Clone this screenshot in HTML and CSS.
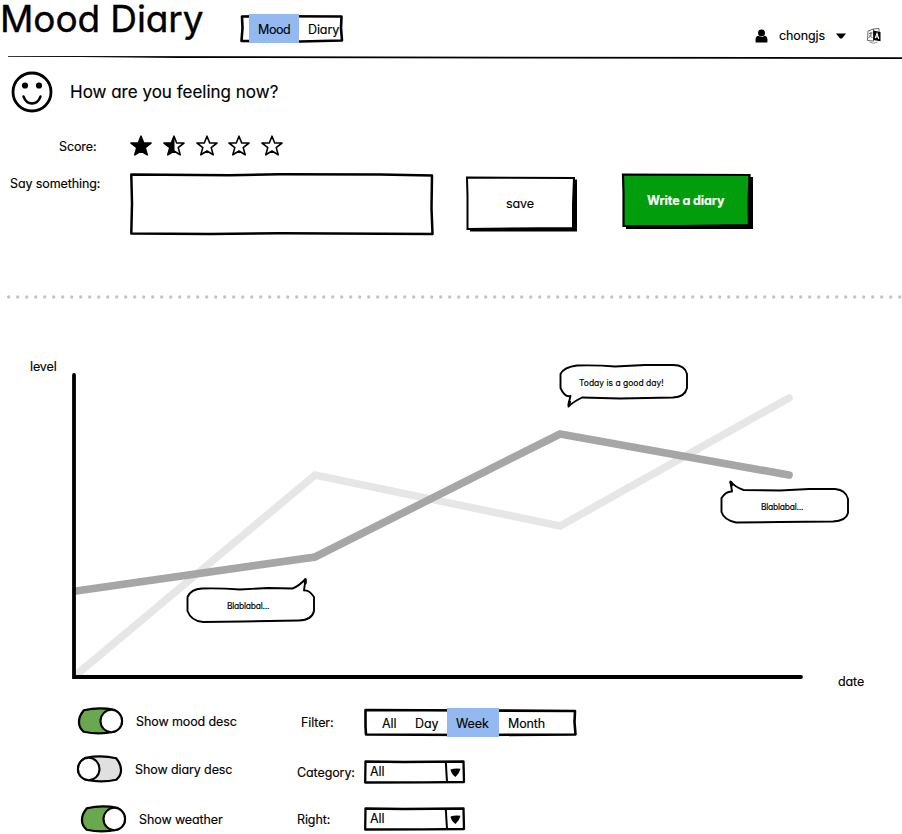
FILE: index.html
```html
<!DOCTYPE html>
<html lang="en">
<head>
<meta charset="utf-8">
<title>Mood Diary</title>
<link rel="stylesheet" href="styles.css">
</head>
<body>
<svg class="defs" width="0" height="0" aria-hidden="true">
  <symbol id="star" viewBox="0 0 22 22"><path d="M11 1.200L13.700 8H21L15.200 12.600 17.200 19.800 11 16 4.800 19.800 6.800 12.600 1 8H8.300z" stroke="#000" stroke-width="1.600" stroke-linejoin="round"/></symbol>
  <symbol id="toggle-on" viewBox="0 0 48 28"><path d="M7 3Q22-.5 38 2.500 46 7 46 14T38 25Q22 28.500 7 25 2 21 2 15T7 3z" fill="#6aa84f" stroke="#000" stroke-width="2.300"/><ellipse cx="35" cy="14" rx="11" ry="11.400" fill="#fff" stroke="#000" stroke-width="2.100"/></symbol>
  <symbol id="toggle-off" viewBox="0 0 48 28"><path d="M41 3Q26-.5 10 2.500 2 7 2 14T10 25Q26 28.500 41 25 46 21 46 15T41 3z" fill="#e0e0e0" stroke="#000" stroke-width="2.300"/><ellipse cx="13" cy="14" rx="11" ry="11.400" fill="#fff" stroke="#000" stroke-width="2.100"/></symbol>
  <symbol id="select" viewBox="0 0 102 24"><path d="M1.500 1.500L40 2 99.500 1.500 100 22 60 22.300 1.200 22.500z" fill="#fff" stroke="#000" stroke-width="2.300" stroke-linejoin="round"/><path d="M81.800 2L83 22" stroke="#000" stroke-width="2"/><path d="M86.500 9.500Q91 8 96.500 8.800 95.500 13.500 91.500 17 87.500 14.500 86.500 9.500z"/></symbol>
</svg>

<header class="header">
  <h1 class="title">Mood Diary</h1>
  <nav class="tabs">
    <svg class="frame" viewBox="0 0 104 30"><path d="M2 2.500L40 2.200 101.500 2.500 101 14 102 26.500 60 27.500 1.500 27 2.500 14z" fill="#fff" stroke="#000" stroke-width="2.600" stroke-linejoin="round"/></svg>
    <span class="tab tab-mood active">Mood</span>
    <span class="tab tab-diary">Diary</span>
  </nav>
  <div class="account">
    <svg class="user" viewBox="0 0 14 14"><circle cx="7" cy="3.700" r="3.700"/><path d="M.8 14Q-.3 7.500 3.500 6.700 7 9 10.500 6.700 14.300 7.500 13.200 14z"/></svg>
    <span class="name">chongjs</span>
    <svg class="caret" viewBox="0 0 10 6"><path d="M0 .5H10L6 5.500H4z"/></svg>
    <svg class="lang" viewBox="0 0 16 16"><path d="M2 3L7.500 1V13L1.500 12.500zM7.500 1L13 .5V3.500" fill="#fff" stroke="#444" stroke-width=".8"/><path d="M3 5.500L6.500 5M5 4Q6 8 2.500 10M3.500 7L6.500 10" fill="none" stroke="#444" stroke-width=".8"/><path d="M7.300 2.500L14.500 4V13.200L7.300 12z"/><path d="M9.200 10.300L11 5.500 12.800 11M9.800 8.800L12.200 9" fill="none" stroke="#fff" stroke-width="1.100"/><path d="M3.500 14Q8 16.500 11.500 14" fill="none" stroke="#777" stroke-width=".8"/></svg>
  </div>
</header>
<svg class="rule" viewBox="0 0 902 6"><path d="M8 2L40 2 902 3.200V5L180 4 80 3 8 2.800z"/></svg>

<main>
  <section class="feeling">
    <svg class="smile" viewBox="0 0 42 42"><circle cx="21" cy="21" r="19" fill="none" stroke="#000" stroke-width="2.800"/><circle cx="14" cy="14.500" r="3.100"/><circle cx="28" cy="14.500" r="3.100"/><path d="M12.500 25.500Q15 32.500 21 32.500T29.500 25.500" fill="none" stroke="#000" stroke-width="2.400" stroke-linecap="round"/></svg>
    <h2 class="question">How are you feeling now?</h2>
  </section>

  <section class="score">
    <span class="label label-score">Score:</span>
    <div class="stars">
      <svg class="star full"><use href="#star"/></svg>
      <svg class="star" viewBox="0 0 22 22"><use href="#star" width="22" height="22"/><path class="half" d="M11.500 1.200V16L4.800 19.800 6.800 12.600 1 8H8.300z"/></svg>
      <svg class="star"><use href="#star"/></svg>
      <svg class="star"><use href="#star"/></svg>
      <svg class="star"><use href="#star"/></svg>
    </div>
  </section>

  <section class="entry">
    <span class="label label-say">Say something:</span>
    <svg class="box" viewBox="0 0 304 64"><path d="M1.300 1.500L100 2.300 150 1.300 250 1.500 302 2.500 301.500 35 302.500 61 150 60.300 80 61 1.300 60.500 2 30z" fill="#fff" stroke="#000" stroke-width="2.500" stroke-linejoin="round"/></svg>
    <div class="button save">
      <svg class="frame" viewBox="0 0 112 56"><path d="M4 3.500H111V55.500H4z"/><path d="M1 1.500L108 2 107 28 107 52 1.500 53 1.500 20z" fill="#fff" stroke="#000" stroke-width="2"/></svg>
      <span class="button-text save-text">save</span>
    </div>
    <div class="button write">
      <svg class="frame" viewBox="0 0 132 56"><path d="M4 4H131V56H4z"/><path d="M1 1.500L127.500 2 126.500 30 127 52 60 53 1.500 53 1.500 20z" fill="#029d0c" stroke="#000" stroke-width="2.200"/></svg>
      <span class="button-text write-text">Write a diary</span>
    </div>
  </section>

  <svg class="dots" viewBox="0 0 902 6"><path d="M8.700 3H902" stroke="#c3c3c3" stroke-width="3.400" stroke-linecap="round" stroke-dasharray="0 9"/></svg>

  <section class="chart">
    <svg class="plot" viewBox="0 340 902 360">
      <g fill="none" stroke-linecap="round" stroke-linejoin="miter">
        <path d="M76 675L315 475 560 526 789 398" stroke="#e6e6e6" stroke-width="7.600"/>
        <path d="M76 591L315 557 560 434 789 475" stroke="#a6a6a6" stroke-width="7.600"/>
        <path d="M74 375V677H801" stroke="#000" stroke-width="3.800"/>
      </g>
      <g fill="#fff" stroke="#000" stroke-width="1.900" stroke-linejoin="round">
        <path d="M202 588.500Q220 588 240 589.500L268 588 292.500 588.500Q299 586 305.500 579L304 590.500Q309 589.500 314 597V611Q312 620 299 620.500L243 621.500 203 622Q191 621 187.500 611V597Q191 589 202 588.500z"/>
        <path d="M577 365.500Q598 365 615 366.500L645 365 673 365Q685 365 687 374V388Q685 397 673 397.500L620 398.500 582 397.500Q573 402 568.500 406.500 569 401 570.500 396 565 398 560.500 388V374Q564 367 577 365.500z"/>
        <path d="M743.500 490L780 490.500 809 489 835 489Q846 490 848 499V513Q846 521 833 521.500L780 522 736 522.500Q724 520 721.500 512V498Q726 491 732 491.500L730.500 481.500Q735 487 743.500 490z"/>
      </g>
      <g stroke="#000" stroke-width="3" stroke-linecap="round"><path d="M305.300 580V583M569 404.500L569.500 402M731 482.500L731.500 485"/></g>
    </svg>
    <span class="chart-label axis-level">level</span>
    <span class="chart-label axis-date">date</span>
    <span class="chart-label note note-a">Blablabal...</span>
    <span class="chart-label note note-b">Today is a good day!</span>
    <span class="chart-label note note-c">Blablabal...</span>
  </section>

  <section class="controls">
    <div class="toggles">
      <div class="toggle t1"><svg><use href="#toggle-on"/></svg><span>Show mood desc</span></div>
      <div class="toggle t2"><svg><use href="#toggle-off"/></svg><span>Show diary desc</span></div>
      <div class="toggle t3"><svg><use href="#toggle-on"/></svg><span>Show weather</span></div>
    </div>
    <div class="filters">
      <div class="filter f1"><span class="filter-label">Filter:</span>
        <div class="periods">
          <svg class="frame" viewBox="0 0 213 30"><path d="M1.500 2L60 2.200 211 3 210.500 14 211.500 26.500 110 27 2 26.500 1.500 18z" fill="#fff" stroke="#000" stroke-width="2.600" stroke-linejoin="round"/></svg>
          <span class="period p-all">All</span><span class="period p-day">Day</span><span class="period p-week active">Week</span><span class="period p-month">Month</span>
        </div>
      </div>
      <div class="filter f2"><span class="filter-label">Category:</span><div class="select"><svg class="frame"><use href="#select"/></svg><span>All</span></div></div>
      <div class="filter f3"><span class="filter-label">Right:</span><div class="select"><svg class="frame"><use href="#select"/></svg><span>All</span></div></div>
    </div>
  </section>
</main>
</body>
</html>
```
FILE: styles.css
```css
* { box-sizing: border-box; }
body { margin: 0; width: 902px; height: 834px; overflow: hidden; background: #fff; color: #000; font: 400 12.5px/18px Inter, "Liberation Sans", sans-serif; letter-spacing: -.1px; font-feature-settings: "cv11"; -webkit-text-stroke: .15px; white-space: nowrap; }
svg { display: block; flex: none; overflow: visible; }
.defs { position: absolute; }
h1, h2 { margin: 0; font-weight: 400; }
.frame { position: absolute; inset: 0; width: 100%; height: 100%; }

.header { display: flex; height: 54px; }
.title { width: 240px; height: 48px; font-size: 37px; line-height: 38px; letter-spacing: -.1px; -webkit-text-stroke: .4px; }
.tabs { position: relative; display: flex; width: 104px; height: 30px; margin-top: 14px; padding-left: 9px; }
.tab { position: relative; height: 29px; line-height: 32px; padding-left: 9px; letter-spacing: -.4px; }
.tab-diary { letter-spacing: -.1px; }
.tab-mood { width: 50px; }
.active { background: #94b9f1; }
.account { display: flex; align-items: center; margin: 28px 0 0 411px; height: 15px; }
.user { width: 13px; height: 14px; }
.name { width: 46px; margin-left: 11px; }
.caret { width: 10px; height: 6px; margin-left: 11px; }
.lang { width: 16px; height: 16px; margin-left: 20px; }
.rule { width: 902px; height: 6px; }

.feeling { display: flex; align-items: center; height: 64px; padding-left: 11px; }
.smile { width: 42px; height: 42px; }
.question { margin-left: 17px; font-size: 17px; line-height: 20px; letter-spacing: 0; }

.score { display: flex; align-items: center; height: 44px; }
.label-score { width: 130px; padding: 1px 0 0 59px; }
.stars { display: flex; gap: 10.8px; }
.star { width: 22px; height: 22px; fill: #fff; }
.full, .half { fill: #000; }

.entry { display: flex; align-items: flex-start; height: 126px; }
.label-say { width: 130px; padding: 7px 0 0 10px; }
.box { width: 304px; height: 64px; margin-top: 5px; }
.button { position: relative; height: 56px; }
.save { width: 112px; margin: 8px 0 0 32px; padding: 19px 0 0 40px; }
.write { width: 132px; margin: 5px 0 0 44px; padding: 19px 0 0 25px; color: #fff; font-weight: 700; }
.button-text { position: relative; display: block; }
.dots { width: 902px; height: 6px; }

.chart { position: relative; height: 360px; margin-top: 40px; }
.plot { width: 902px; height: 360px; }
.chart-label { position: absolute; }
.axis-level { left: 30px; top: 18px; }
.axis-date { left: 838px; top: 333px; }
.note { font-size: 8.500px; line-height: 12px; letter-spacing: 0; }
.note-a { left: 227px; top: 260px; letter-spacing: -.25px; }
.note-b { left: 579px; top: 37px; }
.note-c { left: 761px; top: 161px; letter-spacing: -.25px; }

.controls { display: flex; height: 134px; }
.toggles { width: 297px; padding: 7px 0 0 77px; }
.toggle { display: flex; align-items: center; height: 28px; gap: 11px; }
.toggle svg { width: 47px; height: 28px; margin-right: 1px; }
.toggle span { padding-top: 2px; }
.t2 { margin: 20px 0 22px -1px; }
.t3 { margin-left: 3px; }
.filter { display: flex; }
.filter-label { width: 67px; }
.f1 { height: 52px; padding-top: 8px; }
.f1 .filter-label { padding: 6px 0 0 4px; }
.f2 { height: 47px; padding-top: 8px; }
.f2 .filter-label, .f3 .filter-label { padding-top: 4px; }
.f3 { padding-top: 8px; }
.periods { position: relative; display: flex; width: 213px; height: 30px; padding-left: 18px; }
.period { position: relative; height: 29px; line-height: 32px; }
.p-all { width: 33px; }
.p-day { width: 32px; }
.p-week { width: 52px; padding-left: 9px; }
.p-month { padding-left: 9px; }
.select { position: relative; width: 102px; height: 24px; padding: 3px 0 0 6px; }
.select span { position: relative; }
```
